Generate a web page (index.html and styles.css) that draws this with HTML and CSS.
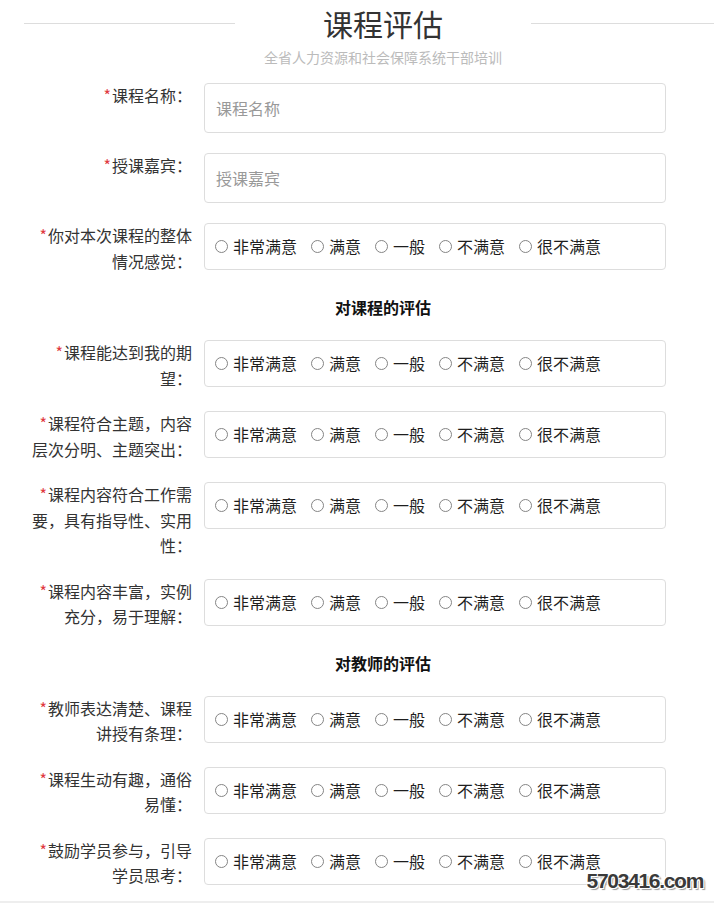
FILE: index.html
```html
<!DOCTYPE html>
<html lang="zh-CN">
<head>
<meta charset="utf-8">
<title>课程评估</title>
<link rel="stylesheet" href="styles.css">
</head>
<body>
<div class="page">
  <header class="header">
    <span class="rule rule-left"></span>
    <h1 class="title">课程评估</h1>
    <span class="rule rule-right"></span>
  </header>
  <p class="subtitle">全省人力资源和社会保障系统干部培训</p>

  <form class="form">
    <div class="row">
      <label class="label"><span class="star">*</span>课程名称：</label>
      <input class="field" type="text" placeholder="课程名称">
    </div>
    <div class="row">
      <label class="label"><span class="star">*</span>授课嘉宾：</label>
      <input class="field" type="text" placeholder="授课嘉宾">
    </div>
    <div class="row">
      <label class="label"><span class="star">*</span>你对本次课程的整体情况感觉：</label>
      <div class="choices">
        <span class="choice"><span class="dot"></span>非常满意</span>
        <span class="choice"><span class="dot"></span>满意</span>
        <span class="choice"><span class="dot"></span>一般</span>
        <span class="choice"><span class="dot"></span>不满意</span>
        <span class="choice"><span class="dot"></span>很不满意</span>
      </div>
    </div>

    <h2 class="section">对课程的评估</h2>

    <div class="row">
      <label class="label"><span class="star">*</span>课程能达到我的期望：</label>
      <div class="choices">
        <span class="choice"><span class="dot"></span>非常满意</span>
        <span class="choice"><span class="dot"></span>满意</span>
        <span class="choice"><span class="dot"></span>一般</span>
        <span class="choice"><span class="dot"></span>不满意</span>
        <span class="choice"><span class="dot"></span>很不满意</span>
      </div>
    </div>
    <div class="row">
      <label class="label"><span class="star">*</span>课程符合主题，内容层次分明、主题突出：</label>
      <div class="choices">
        <span class="choice"><span class="dot"></span>非常满意</span>
        <span class="choice"><span class="dot"></span>满意</span>
        <span class="choice"><span class="dot"></span>一般</span>
        <span class="choice"><span class="dot"></span>不满意</span>
        <span class="choice"><span class="dot"></span>很不满意</span>
      </div>
    </div>
    <div class="row">
      <label class="label"><span class="star">*</span>课程内容符合工作需要，具有指导性、实用性：</label>
      <div class="choices">
        <span class="choice"><span class="dot"></span>非常满意</span>
        <span class="choice"><span class="dot"></span>满意</span>
        <span class="choice"><span class="dot"></span>一般</span>
        <span class="choice"><span class="dot"></span>不满意</span>
        <span class="choice"><span class="dot"></span>很不满意</span>
      </div>
    </div>
    <div class="row">
      <label class="label"><span class="star">*</span>课程内容丰富，实例充分，易于理解：</label>
      <div class="choices">
        <span class="choice"><span class="dot"></span>非常满意</span>
        <span class="choice"><span class="dot"></span>满意</span>
        <span class="choice"><span class="dot"></span>一般</span>
        <span class="choice"><span class="dot"></span>不满意</span>
        <span class="choice"><span class="dot"></span>很不满意</span>
      </div>
    </div>

    <h2 class="section">对教师的评估</h2>

    <div class="row">
      <label class="label"><span class="star">*</span>教师表达清楚、课程讲授有条理：</label>
      <div class="choices">
        <span class="choice"><span class="dot"></span>非常满意</span>
        <span class="choice"><span class="dot"></span>满意</span>
        <span class="choice"><span class="dot"></span>一般</span>
        <span class="choice"><span class="dot"></span>不满意</span>
        <span class="choice"><span class="dot"></span>很不满意</span>
      </div>
    </div>
    <div class="row">
      <label class="label"><span class="star">*</span>课程生动有趣，通俗易懂：</label>
      <div class="choices">
        <span class="choice"><span class="dot"></span>非常满意</span>
        <span class="choice"><span class="dot"></span>满意</span>
        <span class="choice"><span class="dot"></span>一般</span>
        <span class="choice"><span class="dot"></span>不满意</span>
        <span class="choice"><span class="dot"></span>很不满意</span>
      </div>
    </div>
    <div class="row">
      <label class="label"><span class="star">*</span>鼓励学员参与，引导学员思考：</label>
      <div class="choices">
        <span class="choice"><span class="dot"></span>非常满意</span>
        <span class="choice"><span class="dot"></span>满意</span>
        <span class="choice"><span class="dot"></span>一般</span>
        <span class="choice"><span class="dot"></span>不满意</span>
        <span class="choice"><span class="dot"></span>很不满意</span>
      </div>
    </div>
  </form>
  <div class="footer-band"></div>
  <div class="watermark">5703416.com</div>
</div>
</body>
</html>
```

FILE: styles.css
```css
html, body {
  margin: 0;
  padding: 0;
  background: #ffffff;
  overflow-x: hidden;
}

body {
  font-family: "Noto Sans CJK SC", "Noto Sans", sans-serif;
  color: #333333;
  font-size: 16px;
}

.page {
  position: relative;
  min-height: 903px;
}

.header {
  display: flex;
  align-items: center;
  height: 44px;
  padding-top: 1px;
}

.rule {
  height: 1px;
  background: #dddddd;
}

.rule-left {
  width: 211px;
  margin-left: 24px;
  flex: none;
}

.rule-right {
  flex: 1;
}

.title {
  margin: 0 88px;
  font-size: 30px;
  font-weight: 400;
  line-height: 44px;
  color: #333333;
  white-space: nowrap;
}

.subtitle {
  margin: 2px 0 0 0;
  padding-left: 52px;
  text-align: center;
  font-size: 14px;
  line-height: 20px;
  color: #bbbbbb;
}

.form {
  display: flex;
  flex-direction: column;
  gap: 20px;
  margin: 16px 0 0 0;
  padding-bottom: 12px;
}

.row {
  display: flex;
  align-items: flex-start;
  padding-left: 32px;
}

.label {
  flex: none;
  width: 160px;
  margin-right: 12px;
  text-align: right;
  line-height: 25.5px;
  color: #333333;
}

.star {
  color: #e0393e;
  margin-right: 1px;
}

.field {
  flex: none;
  box-sizing: border-box;
  width: 462px;
  height: 50px;
  margin: 0;
  padding: 0 11px;
  border: 1px solid #dddddd;
  border-radius: 4px;
  font-family: "Noto Sans CJK SC", "Noto Sans", sans-serif;
  font-size: 16px;
  color: #333333;
  background: #ffffff;
  outline: none;
}

.field::placeholder {
  color: #999999;
}

.choices {
  flex: none;
  box-sizing: border-box;
  width: 462px;
  height: 47px;
  display: flex;
  align-items: center;
  padding: 0 10px;
  border: 1px solid #dddddd;
  border-radius: 4px;
  line-height: 25px;
  color: #1e1e1e;
}

.choice {
  display: inline-flex;
  align-items: center;
  margin-right: 14px;
  white-space: nowrap;
}

.dot {
  box-sizing: border-box;
  width: 13px;
  height: 13px;
  margin-right: 5px;
  border: 1px solid #858585;
  border-radius: 50%;
  background: #ffffff;
}

.section {
  margin: 0;
  padding-left: 52px;
  text-align: center;
  font-size: 16px;
  font-weight: 700;
  line-height: 26px;
  color: #111111;
}

.footer-band {
  height: 2px;
  background: #eeeeee;
}

.watermark {
  position: absolute;
  right: 11px;
  bottom: 10px;
  font-family: "Liberation Sans", Arial, sans-serif;
  font-weight: 700;
  font-size: 21px;
  letter-spacing: -1.3px;
  color: #3a3a3a;
  text-shadow: -1px -1px 0 #ffffff, 1px -1px 0 #ffffff, -1px 1px 0 #ffffff, 1px 1px 0 #ffffff, 2px 2px 1px #9a9a9a;
}
```
